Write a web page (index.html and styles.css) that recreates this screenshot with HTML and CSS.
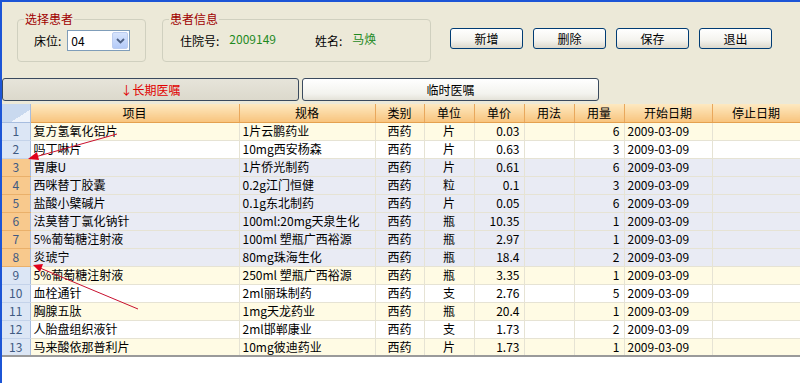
FILE: index.html
```html
<!DOCTYPE html>
<html lang="zh-CN">
<head>
    <meta charset="UTF-8">
    <meta name="viewport" content="width=device-width, initial-scale=1.0">
    <title>医嘱管理</title>
    <link rel="stylesheet" href="styles.css">
</head>
<body>
    <div class="window">
        <div class="top">
            <div class="group group-bed">
                <span class="group-title">选择患者</span>
                <span class="label">床位:</span>
                <div class="combo">
                    <span class="combo-text">04</span>
                    <span class="combo-btn">
                        <svg width="9" height="6" viewBox="0 0 9 6"><path d="M1 1 L4.5 4.5 L8 1" fill="none" stroke="#4d6185" stroke-width="1.8"/></svg>
                    </span>
                </div>
            </div>
            <div class="group group-info">
                <span class="group-title">患者信息</span>
                <span class="label">住院号:</span>
                <span class="value">2009149</span>
                <span class="label label-name">姓名:</span>
                <span class="value">马焕</span>
            </div>
            <div class="actions">
                <button class="btn">新增</button>
                <button class="btn">删除</button>
                <button class="btn">保存</button>
                <button class="btn">退出</button>
            </div>
        </div>

        <div class="tabs">
            <button class="tab tab-active">↓长期医嘱</button>
            <button class="tab">临时医嘱</button>
        </div>

        <div class="grid">
            <table>
                <colgroup>
                    <col style="width:28px"><col style="width:209px"><col style="width:136px"><col style="width:49px"><col style="width:50px">
                    <col style="width:50px"><col style="width:50px"><col style="width:50px"><col style="width:88px"><col style="width:88px">
                </colgroup>
                <thead>
                    <tr>
                        <th class="corner"></th>
                        <th>项目</th><th>规格</th><th>类别</th><th>单位</th><th>单价</th>
                        <th>用法</th><th>用量</th><th>开始日期</th><th>停止日期</th>
                    </tr>
                </thead>
                <tbody>
                    <tr class="odd"><td class="num">1</td><td>复方氢氧化铝片</td><td>1片云鹏药业</td><td class="c">西药</td><td class="c">片</td><td class="r">0.03</td><td></td><td class="r">6</td><td>2009-03-09</td><td></td></tr>
                    <tr><td class="num">2</td><td>吗丁啉片</td><td>10mg西安杨森</td><td class="c">西药</td><td class="c">片</td><td class="r">0.63</td><td></td><td class="r">3</td><td>2009-03-09</td><td></td></tr>
                    <tr class="sel"><td class="num">3</td><td>胃康U</td><td>1片侨光制药</td><td class="c">西药</td><td class="c">片</td><td class="r">0.61</td><td></td><td class="r">6</td><td>2009-03-09</td><td></td></tr>
                    <tr class="sel"><td class="num">4</td><td>西咪替丁胶囊</td><td>0.2g江门恒健</td><td class="c">西药</td><td class="c">粒</td><td class="r">0.1</td><td></td><td class="r">3</td><td>2009-03-09</td><td></td></tr>
                    <tr class="sel"><td class="num">5</td><td>盐酸小檗碱片</td><td>0.1g东北制药</td><td class="c">西药</td><td class="c">片</td><td class="r">0.05</td><td></td><td class="r">6</td><td>2009-03-09</td><td></td></tr>
                    <tr class="sel"><td class="num">6</td><td>法莫替丁氯化钠针</td><td>100ml:20mg天泉生化</td><td class="c">西药</td><td class="c">瓶</td><td class="r">10.35</td><td></td><td class="r">1</td><td>2009-03-09</td><td></td></tr>
                    <tr class="sel"><td class="num">7</td><td>5%葡萄糖注射液</td><td>100ml 塑瓶广西裕源</td><td class="c">西药</td><td class="c">瓶</td><td class="r">2.97</td><td></td><td class="r">1</td><td>2009-03-09</td><td></td></tr>
                    <tr class="sel"><td class="num">8</td><td>炎琥宁</td><td>80mg珠海生化</td><td class="c">西药</td><td class="c">瓶</td><td class="r">18.4</td><td></td><td class="r">2</td><td>2009-03-09</td><td></td></tr>
                    <tr class="odd"><td class="num">9</td><td>5%葡萄糖注射液</td><td>250ml 塑瓶广西裕源</td><td class="c">西药</td><td class="c">瓶</td><td class="r">3.35</td><td></td><td class="r">1</td><td>2009-03-09</td><td></td></tr>
                    <tr><td class="num">10</td><td>血栓通针</td><td>2ml丽珠制药</td><td class="c">西药</td><td class="c">支</td><td class="r">2.76</td><td></td><td class="r">5</td><td>2009-03-09</td><td></td></tr>
                    <tr class="odd"><td class="num">11</td><td>胸腺五肽</td><td>1mg天龙药业</td><td class="c">西药</td><td class="c">瓶</td><td class="r">20.4</td><td></td><td class="r">1</td><td>2009-03-09</td><td></td></tr>
                    <tr><td class="num">12</td><td>人胎盘组织液针</td><td>2ml邯郸康业</td><td class="c">西药</td><td class="c">支</td><td class="r">1.73</td><td></td><td class="r">2</td><td>2009-03-09</td><td></td></tr>
                    <tr class="odd"><td class="num">13</td><td>马来酸依那普利片</td><td>10mg彼迪药业</td><td class="c">西药</td><td class="c">片</td><td class="r">1.73</td><td></td><td class="r">1</td><td>2009-03-09</td><td></td></tr>
                </tbody>
            </table>
        </div>

        <!-- annotation arrows drawn over the grid -->
        <svg class="marks" width="800" height="383" viewBox="0 0 800 383">
            <line x1="117" y1="134" x2="35" y2="157" stroke="#c8102e" stroke-width="1"/>
            <polygon points="28,159 37,152 39,160" fill="#e0001b"/>
            <line x1="138" y1="309" x2="40" y2="268" stroke="#c8102e" stroke-width="1"/>
            <polygon points="33,265 43,264 40,272" fill="#e0001b"/>
        </svg>
    </div>
</body>
</html>
```

FILE: styles.css
```css
body {
    margin: 0;
    padding: 0;
    font-family: "Noto Sans CJK SC", "Liberation Sans", sans-serif;
    font-size: 12px;
    color: black;
}
.window {
    position: relative;
    width: 800px;
    height: 383px;
    box-sizing: border-box;
    border-top: 2px solid #1c55d6;
    border-left: 2px solid #1c55d6;
    background-color: #ece9d8;
    display: flex;
    flex-direction: column;
    overflow: hidden;
}
.top {
    display: flex;
    align-items: flex-start;
    height: 76px;
    box-sizing: border-box;
    padding: 17px 0 0 15px;
}
.group {
    position: relative;
    height: 43px;
    box-sizing: border-box;
    border: 1px solid #d0d0bf;
    border-radius: 4px;
    display: flex;
    align-items: center;
}
.group-title {
    position: absolute;
    top: -9px;
    left: 6px;
    padding: 0 1px;
    background-color: #ece9d8;
    color: #a00000;
    line-height: 16px;
}
.group-bed {
    width: 129px;
    padding-left: 16px;
}
.group-info {
    width: 269px;
    margin-left: 16px;
    padding-left: 17px;
}
.label {
    line-height: 16px;
}
.label-name {
    margin-left: 39px;
}
.value {
    color: #1f8a1f;
    margin-left: 10px;
    margin-bottom: 4px;
    line-height: 16px;
}
.combo {
    display: flex;
    align-items: center;
    justify-content: space-between;
    width: 63px;
    height: 21px;
    box-sizing: border-box;
    margin-left: 6px;
    border: 1px solid #7f9db9;
    background-color: white;
    padding: 1px;
}
.combo-text {
    padding-left: 2px;
}
.combo-btn {
    display: flex;
    align-items: center;
    justify-content: center;
    width: 16px;
    height: 17px;
    box-sizing: border-box;
    border: 1px solid #bccdf0;
    border-radius: 2px;
    background: linear-gradient(#d7e4fd, #b4cbf8);
}
.actions {
    display: flex;
    gap: 10px;
    margin-left: 19px;
    margin-top: 9px;
}
.btn {
    width: 73px;
    height: 21px;
    padding: 0;
    font-family: inherit;
    font-size: 12px;
    color: black;
    border: 1px solid #003c74;
    border-radius: 3px;
    background: linear-gradient(#ffffff 0%, #f4f3ee 60%, #dcd8cc 100%);
}
.tabs {
    display: flex;
    gap: 3px;
    height: 23px;
    margin-bottom: 3px;
}
.tab {
    width: 297px;
    height: 23px;
    padding: 0;
    font-family: inherit;
    font-size: 12px;
    color: black;
    border: 1px solid #3a4a5e;
    border-radius: 3px;
    background: linear-gradient(#ffffff, #f3f3ee 70%, #e4e2d8);
}
.tab-active {
    color: #e00000;
    background: linear-gradient(#e6e4da, #dcd9cc);
}
.grid {
    flex: 1;
    background-color: white;
}
table {
    width: 798px;
    table-layout: fixed;
    border-collapse: collapse;
    border-bottom: 2px solid #9a9a9a;
}
tr {
    height: 18px;
}
th {
    padding: 0;
    font-weight: normal;
    text-align: center;
    line-height: 16px;
    border-right: 1px solid #e9a85c;
    border-bottom: 1px solid #e5a14f;
    background: linear-gradient(#fde9c1, #f8c47e);
}
th.corner {
    border-right: 1px solid #a7bddf;
    border-bottom: 1px solid #a7bddf;
    background: linear-gradient(to bottom right, #c9d9ef 66%, #eef3fb 66%);
}
td {
    padding: 0 0 0 3px;
    line-height: 16px;
    white-space: nowrap;
    overflow: hidden;
    border-right: 1px solid #e6e3d4;
    border-bottom: 1px solid #e6e3d4;
}
td.c {
    text-align: center;
    padding: 0;
}
td.r {
    text-align: right;
    padding: 0 4px 0 0;
}
td.num {
    padding: 0;
    text-align: center;
    color: #3f5a82;
    background-color: #dce6f5;
    border-right: 1px solid #a7bddf;
    border-bottom: 1px solid #c4d3ea;
}
tr.odd td {
    background-color: #fffbe4;
}
tr.sel td {
    background-color: #e9ebf4;
}
tr.sel td.num {
    background-color: #f8c98d;
    border-bottom: 1px solid #eab06a;
}
tr.odd td.num {
    background-color: #dce6f5;
}
.marks {
    position: absolute;
    top: -2px;
    left: -2px;
    pointer-events: none;
}
```
